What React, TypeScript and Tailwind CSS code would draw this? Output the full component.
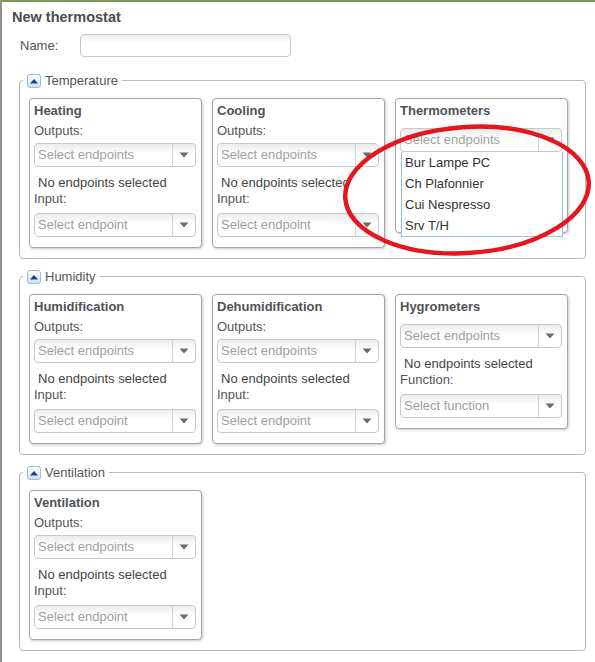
import React from "react";

function Caret({ up = false, color }: { up?: boolean; color: string }) {
  return (
    <svg width="10" height="6" viewBox="0 0 10 6">
      {up ? (
        <polygon points="1,5.5 9,5.5 5,1" fill={color} />
      ) : (
        <polygon points="0.5,0.5 9.5,0.5 5,5.5" fill={color} />
      )}
    </svg>
  );
}

function Combo({ placeholder }: { placeholder: string }) {
  return (
    <div className="flex h-[24px] rounded-[4px] border border-[#c9c9c9] bg-[linear-gradient(#ececec,#ffffff_45%)]">
      <div className="flex-1 pl-[3px] text-[13px] leading-[22px] text-[#a0a0a0]">{placeholder}</div>
      <div className="flex w-[23px] items-center justify-center border-l border-[#d2d2d2]">
        <Caret color="#6b6b6b" />
      </div>
    </div>
  );
}

function Panel({
  title,
  firstLabel,
  secondLabel,
  firstPlaceholder,
  secondPlaceholder,
  sensor = false,
  covered = false,
  children,
}: {
  title: string;
  firstLabel?: string;
  secondLabel: string;
  firstPlaceholder: string;
  secondPlaceholder: string;
  sensor?: boolean;
  covered?: boolean;
  children?: React.ReactNode;
}) {
  return (
    <div className="relative w-[173px] self-start rounded-[4px] border border-[#a6a6a6] bg-white pb-[10px] pl-[4px] pr-[5px] pt-[4px] shadow-[1px_1px_3px_rgba(0,0,0,0.22)]">
      <div className="h-[16px] text-[13px] font-bold leading-[16px] text-[#4f535a]">{title}</div>
      {sensor ? (
        <div className="mt-[9px]">
          <Combo placeholder={firstPlaceholder} />
        </div>
      ) : (
        <>
          <div className="h-[24px] text-[13px] leading-[24px] text-[#555]">{firstLabel}</div>
          <Combo placeholder={firstPlaceholder} />
        </>
      )}
      {/* lower part sits under the open list when the picker is expanded */}
      <div className={covered ? "invisible" : ""}>
        <div className="mt-[8px] h-[15px] pl-[4px] text-[13px] leading-[15px] text-[#444]">No endpoints selected</div>
        <div className="h-[17px] text-[13px] leading-[17px] text-[#555]">{secondLabel}</div>
        <div className="mt-[6px]">
          <Combo placeholder={secondPlaceholder} />
        </div>
      </div>
      {children}
    </div>
  );
}

function Group({ title, mt, children }: { title: string; mt: string; children: React.ReactNode }) {
  return (
    <fieldset className={`ml-[17px] w-[567px] rounded-[4px] border border-[#b5b8c8] p-0 ${mt}`}>
      <legend className="ml-[3px] flex h-[15px] items-center gap-[4px] px-[4px]">
        <span className="flex h-[14px] w-[14px] items-center justify-center rounded-[3px] border border-[#99bbe8] bg-[linear-gradient(#ffffff,#d3e1f3)]">
          <Caret up color="#15428b" />
        </span>
        <span className="text-[13px] leading-[15px] text-[#555]">{title}</span>
      </legend>
      <div className="flex gap-[10px] pb-[10px] pl-[9px] pt-[10px]">{children}</div>
    </fieldset>
  );
}

export default function App() {
  const sensors = ["Bur Lampe PC", "Ch Plafonnier", "Cui Nespresso", "Srv T/H"];
  return (
    <div className="relative h-[662px] w-[595px] overflow-hidden border-l-[2px] border-t-[2px] border-l-[#8f8f8f] border-t-[#7c9a5c] bg-white font-['Liberation_Sans',Arial,sans-serif]">
      <div className="flex h-[32px] items-center pl-[10px] text-[14.5px] font-bold text-[#4d4d4d]">New thermostat</div>

      <div className="flex h-[23px] items-center pl-[18px]">
        <span className="w-[60px] text-[13px] text-[#555]">Name:</span>
        <div className="h-[23px] w-[211px] rounded-[4px] border border-[#c9c9c9] bg-[linear-gradient(#efefef,#ffffff_40%)]" />
      </div>

      <Group title="Temperature" mt="mt-[16px]">
        <Panel
          title="Heating"
          firstLabel="Outputs:"
          firstPlaceholder="Select endpoints"
          secondLabel="Input:"
          secondPlaceholder="Select endpoint"
        />
        <Panel
          title="Cooling"
          firstLabel="Outputs:"
          firstPlaceholder="Select endpoints"
          secondLabel="Input:"
          secondPlaceholder="Select endpoint"
        />
        <Panel
          title="Thermometers"
          sensor
          covered
          firstPlaceholder="Select endpoints"
          secondLabel="Function:"
          secondPlaceholder="Select function"
        >
          {/* open endpoint list of the thermometer picker */}
          <div className="absolute left-[5px] top-[53px] w-[162px] border border-t-0 border-[#99bbe8] bg-white">
            {sensors.map((s) => (
              <div key={s} className="h-[21px] pl-[3px] text-[13px] leading-[21px] text-[#333]">
                {s}
              </div>
            ))}
          </div>
        </Panel>
      </Group>

      <Group title="Humidity" mt="mt-[10px]">
        <Panel
          title="Humidification"
          firstLabel="Outputs:"
          firstPlaceholder="Select endpoints"
          secondLabel="Input:"
          secondPlaceholder="Select endpoint"
        />
        <Panel
          title="Dehumidification"
          firstLabel="Outputs:"
          firstPlaceholder="Select endpoints"
          secondLabel="Input:"
          secondPlaceholder="Select endpoint"
        />
        <Panel
          title="Hygrometers"
          sensor
          firstPlaceholder="Select endpoints"
          secondLabel="Function:"
          secondPlaceholder="Select function"
        />
      </Group>

      <Group title="Ventilation" mt="mt-[10px]">
        <Panel
          title="Ventilation"
          firstLabel="Outputs:"
          firstPlaceholder="Select endpoints"
          secondLabel="Input:"
          secondPlaceholder="Select endpoint"
        />
      </Group>

      {/* hand-drawn red highlight ring */}
      <svg className="pointer-events-none absolute left-[338px] top-[118px]" width="257" height="144" viewBox="0 0 257 144">
        <ellipse
          cx="127"
          cy="70"
          rx="122"
          ry="63"
          transform="rotate(-4 127 70)"
          fill="none"
          stroke="#e4161f"
          strokeWidth="4.5"
        />
      </svg>
    </div>
  );
}
